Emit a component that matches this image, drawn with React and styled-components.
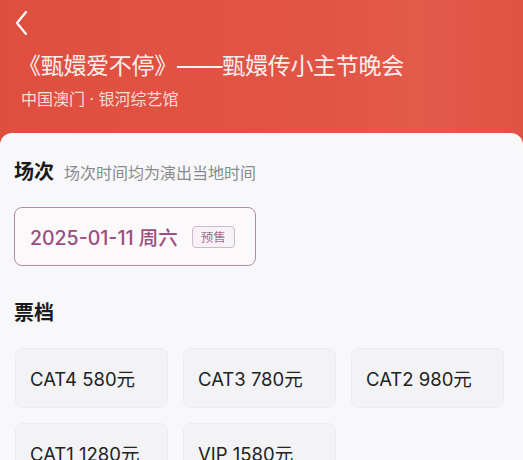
import React from "react";
import styled, { createGlobalStyle } from "styled-components";

const GlobalStyle = createGlobalStyle`
  body {
    margin: 0;
    background: #f8f8fa;
    font-family: Inter, "Noto Sans CJK SC", sans-serif;
  }
`;

const Page = styled.div`
  width: 523px;
  height: 460px;
  overflow: hidden;
  background: linear-gradient(90deg, #df4f40 0%, #e25445 60%, #e35a4b 80%, #e05244 100%);
`;

const Header = styled.header`
  padding: 9px 0 0 18px;
  height: 124px;
  color: #fff;
`;

const BackButton = styled.button`
  display: block;
  margin-left: -7px;
  padding: 0;
  border: none;
  background: none;
  width: 20px;
  height: 28px;
  cursor: pointer;
`;

const Title = styled.h1`
  margin: 14px 0 0;
  font-size: 23px;
  line-height: 30px;
  font-weight: 400;
  letter-spacing: -0.3px;
  color: #fbeeee;
`;

const Venue = styled.div`
  margin: 8px 0 0 3px;
  font-size: 16px;
  line-height: 20px;
  color: #f8dcd8;
`;

const Sheet = styled.main`
  background: #f8f8fa;
  border-radius: 12px 12px 0 0;
  padding: 25px 14px 0;
  height: 400px;
`;

const SectionHead = styled.div`
  display: flex;
  align-items: baseline;
  gap: 10px;
  margin-bottom: ${(p) => p.$gap}px;
`;

const SectionTitle = styled.h2`
  margin: 0;
  font-size: 20px;
  line-height: 28px;
  font-weight: 700;
  color: #1a1a1a;
`;

const SectionNote = styled.span`
  font-size: 16px;
  color: #8a8a8e;
`;

const DateCard = styled.div`
  display: inline-flex;
  align-items: center;
  gap: 14px;
  height: 59px;
  box-sizing: border-box;
  padding: 0 20px 0 15px;
  border: 1px solid #b48aa8;
  border-radius: 8px;
  background: #fcf9fb;
  margin-bottom: 33px;
`;

const DateText = styled.span`
  font-size: 19.5px;
  font-weight: 500;
  color: #9a4e82;
`;

const Badge = styled.span`
  display: inline-flex;
  align-items: center;
  justify-content: center;
  width: 43px;
  height: 22px;
  box-sizing: border-box;
  border: 1px solid #cdb9c8;
  border-radius: 4px;
  background: #f7f2f6;
  font-size: 12.5px;
  color: #a6708f;
`;

const TicketGrid = styled.div`
  display: grid;
  grid-template-columns: repeat(3, 153px);
  column-gap: 15px;
  row-gap: 15px;
  padding-left: 1px;
`;

const Ticket = styled.div`
  height: 60px;
  box-sizing: border-box;
  display: flex;
  align-items: center;
  padding-left: 14px;
  border: 1px solid #ededf0;
  border-radius: 8px;
  background: #f3f3f5;
  font-size: 18.5px;
  color: #222;
`;

const tickets = [
  "CAT4 580元",
  "CAT3 780元",
  "CAT2 980元",
  "CAT1 1280元",
  "VIP 1580元",
];

export default function App() {
  return (
    <Page>
      <GlobalStyle />
      <Header>
        <BackButton aria-label="返回">
          <svg width="20" height="28" viewBox="0 0 20 28" fill="none">
            <path
              d="M15 3 L6 14 L15 25"
              stroke="#fff"
              strokeWidth="2.2"
              strokeLinecap="round"
              strokeLinejoin="round"
            />
          </svg>
        </BackButton>
        <Title>《甄嬛爱不停》——甄嬛传小主节晚会</Title>
        <Venue>中国澳门 · 银河综艺馆</Venue>
      </Header>
      <Sheet>
        <SectionHead $gap={21}>
          <SectionTitle>场次</SectionTitle>
          <SectionNote>场次时间均为演出当地时间</SectionNote>
        </SectionHead>
        <DateCard>
          <DateText>2025-01-11 周六</DateText>
          <Badge>预售</Badge>
        </DateCard>
        <SectionHead $gap={21}>
          <SectionTitle>票档</SectionTitle>
        </SectionHead>
        <TicketGrid>
          {tickets.map((t) => (
            <Ticket key={t}>{t}</Ticket>
          ))}
        </TicketGrid>
      </Sheet>
    </Page>
  );
}
